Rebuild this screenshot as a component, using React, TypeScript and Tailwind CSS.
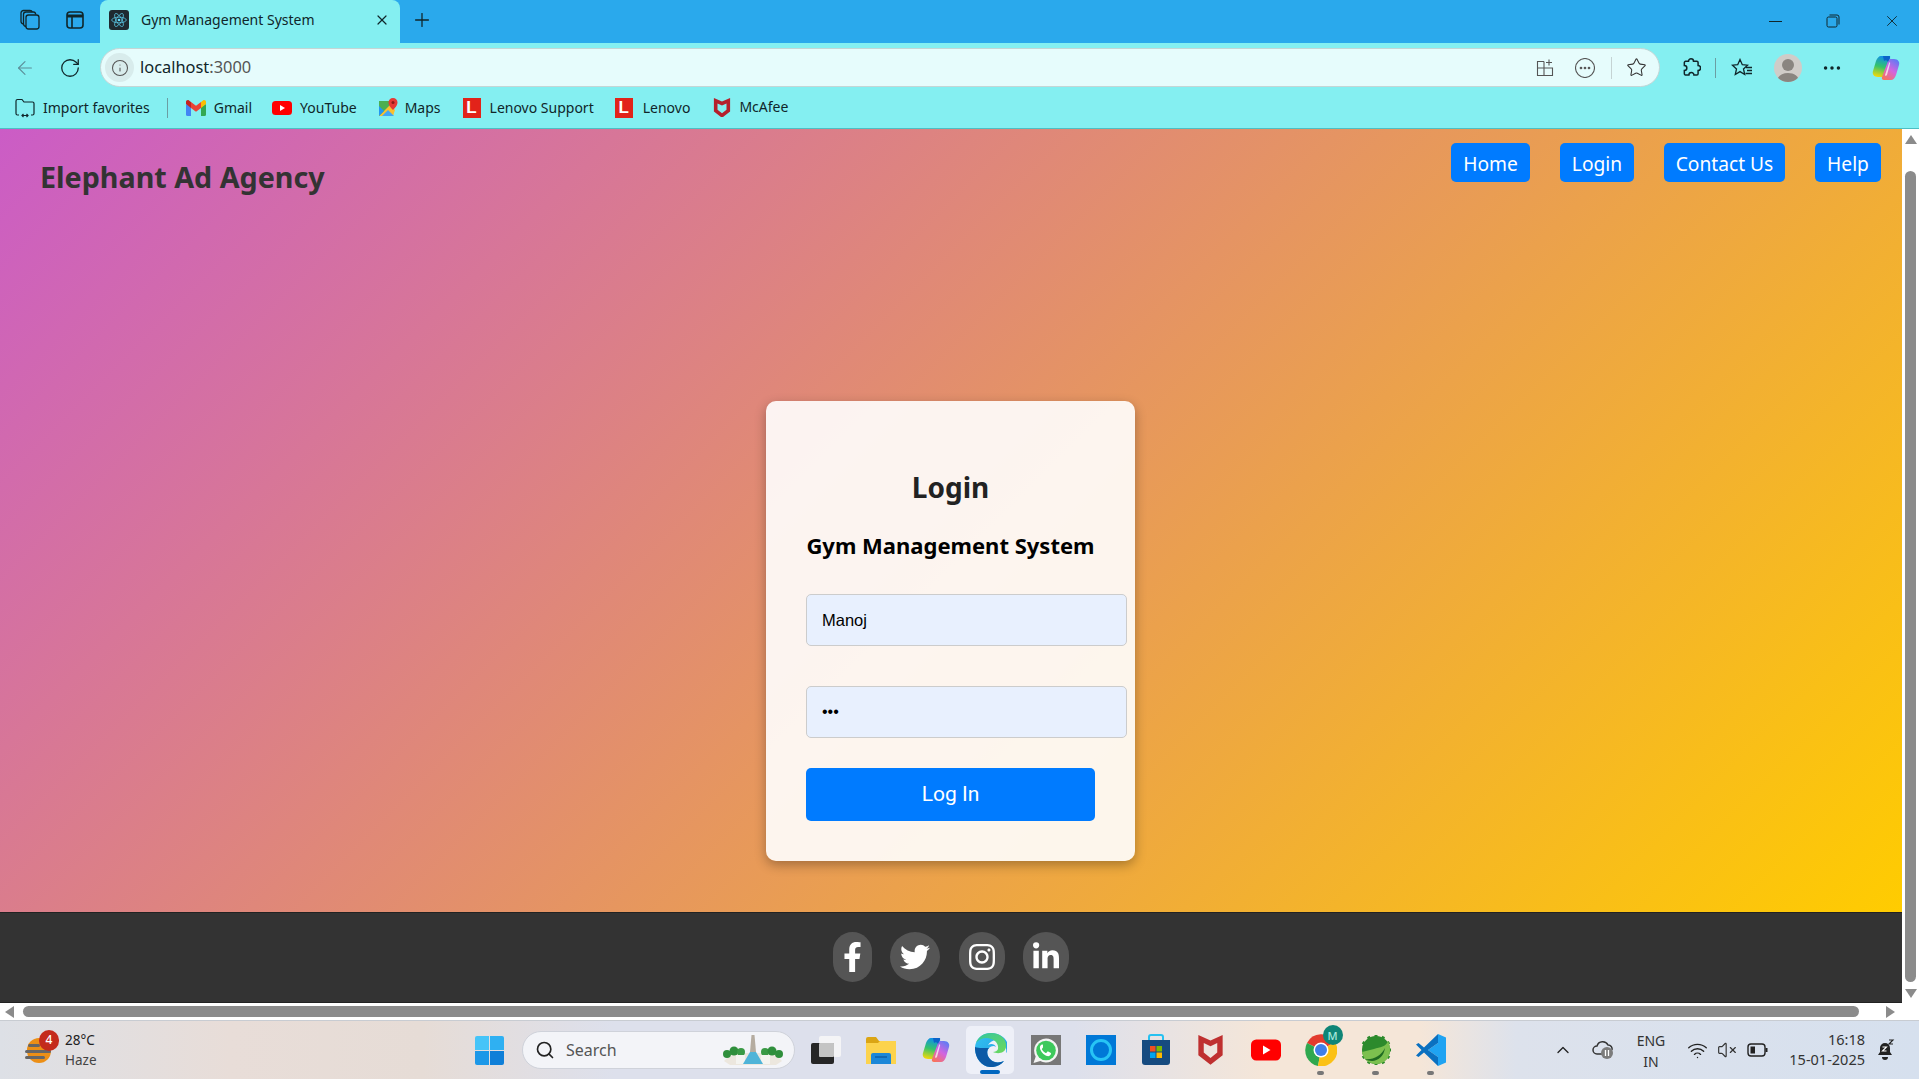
import React from "react";
import { FaFacebookF, FaTwitter, FaInstagram, FaLinkedinIn } from "react-icons/fa";
import { ArrowLeft, RotateCw, Info, X, Plus, Star, Search, ChevronUp, Wifi, VolumeX, MoreHorizontal } from "lucide-react";

const uiFont = "font-['Noto_Sans',sans-serif]";

function Gmail() {
  return (
    <svg width="20" height="16" viewBox="0 0 20 16">
      <path d="M0 4v10.500A1.500 1.500 0 0 0 1.500 16H5V7z" fill="#4285f4" />
      <path d="M20 4v10.500a1.500 1.500 0 0 1-1.500 1.500H15V7z" fill="#34a853" />
      <path d="M15 2v6l-5 3.700L5 8V2l5 3.700z" fill="#ea4335" />
      <path d="M15 2l2-1.500c1.200-.9 3-.1 3 1.500V4l-5 4z" fill="#fbbc04" />
      <path d="M5 2L3 .5C1.800-.4 0 .4 0 2v2l5 4z" fill="#c5221f" />
    </svg>
  );
}

function YouTubeLogo({ w = 20, h = 14 }: { w?: number; h?: number }) {
  return (
    <svg width={w} height={h} viewBox="0 0 20 14">
      <rect width="20" height="14" rx="3.500" fill="#f00" />
      <path d="M8 4l5 3-5 3z" fill="#fff" />
    </svg>
  );
}

function MapsLogo() {
  return (
    <svg width="20" height="20" viewBox="0 0 20 20">
      <path d="M1 3l11 0 0 15-11 0z" fill="#4caf50" />
      <path d="M1 18l11-11 5 5-2 6z" fill="#fbc02d" />
      <path d="M1 8l5 5-5 5z" fill="#2196f3" />
      <path d="M4 18l6-6 6 6z" fill="#42a5f5" />
      <path d="M15 0a4.500 4.500 0 0 0-4.500 4.500C10.500 8 15 12 15 12s4.500-4 4.500-7.500A4.500 4.500 0 0 0 15 0z" fill="#e53935" />
      <circle cx="15" cy="4.500" r="1.500" fill="#8e1a16" />
    </svg>
  );
}

function LenovoLogo() {
  return (
    <span className="flex h-[20px] w-[18px] items-center justify-center bg-[#e2231a] font-['Liberation_Sans',sans-serif] text-[17px] leading-none font-bold text-white">
      L
    </span>
  );
}

function McAfeeLogo({ size = 18, color = "#c8202f" }: { size?: number; color?: string }) {
  return (
    <svg width={size} height={size * 1.100} viewBox="0 0 20 22">
      <path d="M1 0l9 4 9-4v15l-9 7-9-7zM5 6v7l5 4 5-4V6l-5 2.300z" fill={color} fillRule="evenodd" />
    </svg>
  );
}

function CopilotLogo({ size = 28, id }: { size?: number; id: string }) {
  return (
    <svg width={size} height={size} viewBox="0 0 28 28">
      <defs>
        <linearGradient id={`${id}A`} x1="0.500" y1="0" x2="0.300" y2="1">
          <stop offset="0" stopColor="#0f8fe9" />
          <stop offset="0.500" stopColor="#35c46a" />
          <stop offset="1" stopColor="#f5d90a" />
        </linearGradient>
        <linearGradient id={`${id}B`} x1="0.800" y1="0" x2="0.200" y2="1">
          <stop offset="0" stopColor="#5a7cf5" />
          <stop offset="0.500" stopColor="#d264e0" />
          <stop offset="1" stopColor="#f8735a" />
        </linearGradient>
      </defs>
      <path d="M9 2h7c2 0 2.500 1.500 2 3l-6 16c-.5 1.500-1.500 2-3 2H6c-4 0-6-3-5-6l3-10C5 4 7 2 9 2z" fill={`url(#${id}A)`} />
      <path d="M19 26h-7c-2 0-2.500-1.500-2-3l6-16c.5-1.500 1.500-2 3-2h3c4 0 6 3 5 6l-3 10c-1 3-3 5-5 5z" fill={`url(#${id}B)`} />
      <path d="M11 2h6c1 0 1.500.5 1 1.500L16 8c-1-2-3-2-4-1z" fill="#0b63c9" />
      <path d="M13 21l4-12c.3-.9 1-1 1.200 0L15 21c-.3 1-2.300 1-2 0z" fill="#ffffff" opacity="0.700" />
    </svg>
  );
}

function EdgeLogo() {
  return (
    <svg width="32" height="34" viewBox="0 0 32 34">
      <defs>
        <linearGradient id="edA" x1="0" y1="0" x2="1" y2="1">
          <stop offset="0" stopColor="#35c1f1" />
          <stop offset="1" stopColor="#1b9de2" />
        </linearGradient>
        <linearGradient id="edB" x1="0" y1="0" x2="1" y2="1">
          <stop offset="0" stopColor="#33c6a0" />
          <stop offset="1" stopColor="#6ed95a" />
        </linearGradient>
      </defs>
      <path d="M16 0C7 0 1 6 0 14c-.5 10 6 19 15 20 6 .5 11-2 14-6-4 2-10 2-13-1-4-3-5-9-2-12 2-2 5-3 7-1-1-3-5-4-8-2 3-5 9-6 13-3 5 3 6 8 5 11 2-2 2-5 2-7C33 7 26 0 16 0z" fill="url(#edA)" />
      <path d="M16 0C9 0 3 4 1 10c4-5 11-6 15-4 4 1 8 5 7 10-.5 2-3 3-5 3 4 2 12 2 13-5C32 6 25 0 16 0z" fill="url(#edB)" />
      <path d="M0 14c-.5 10 6 19 15 20 6 .5 11-2 14-6-4 2-10 2-13-1-4-3-5-9-2-12-6 0-13 0-14-1z" fill="#0c5aa6" />
    </svg>
  );
}

function ChromeLogo() {
  return (
    <svg width="32" height="32" viewBox="0 0 32 32">
      <path d="M16 16L2 9A16 16 0 0 1 30 8z" fill="#e33b2e" />
      <path d="M16 16L2 9a16 16 0 0 0 11 23z" fill="#2fa84f" />
      <path d="M16 16l14-8a16 16 0 0 1-17 24z" fill="#fbc116" />
      <circle cx="16" cy="16" r="7.500" fill="#fff" />
      <circle cx="16" cy="16" r="6" fill="#3f7fe8" />
    </svg>
  );
}

function SpringLogo() {
  const teeth = [0, 30, 60, 90, 120, 150, 180, 210, 240, 270, 300];
  return (
    <svg width="30" height="30" viewBox="0 0 30 30">
      {teeth.map((deg) => (
        <rect key={deg} x="13.500" y="-0.500" width="3" height="4" fill="#2a8a2a" transform={`rotate(${deg - 60} 15 15)`} />
      ))}
      <circle cx="15" cy="15" r="14" fill="#2c8a2c" />
      <path d="M1 17c1 7 7 12 14 12 8 0 14-6 14-14 0-4-1-7-2-9-2 6-8 6-14 8-4 1-8 2-12 3z" fill="#7cc04f" />
      <path d="M4 24c8 1 16-3 20-11-1 8-7 13-13 13-3 0-5-1-7-2z" fill="#1f6b22" />
    </svg>
  );
}

function VsCodeLogo() {
  return (
    <svg width="30" height="32" viewBox="0 0 30 32">
      <path d="M22 0l8 3.500v25L22 32V23L12 16l10-7z" fill="#1fa3f2" />
      <path d="M22 0L8 13.500 2.500 9 0 10.500 5.500 16 0 21.500 2.500 23 8 18.500 22 32v-9L12 16l10-7z" fill="#0a70c0" />
    </svg>
  );
}

function WhatsAppLogo() {
  return (
    <span className="flex h-[30px] w-[30px] items-center justify-center bg-[#777]">
      <svg width="27" height="27" viewBox="0 0 27 27">
        <path d="M14 1.500a12 12 0 0 0-10.300 18L1.500 26l6.800-2A12 12 0 1 0 14 1.500z" fill="#f4f4f4" />
        <circle cx="14" cy="13.500" r="9.800" fill="#3ec95c" />
        <path d="M10 7.500c-1.500.5-2.500 2-2 4 .8 3 3.500 6.500 7 7.500 2 .5 3.500-.5 4-2 .2-.7 0-1-.5-1.300l-2.300-1.200c-.5-.2-.8 0-1 .3l-.7 1c-.3.3-.5.3-.9.100-1.500-.8-2.800-2-3.600-3.500-.2-.4-.1-.6.200-.9l.6-.7c.3-.3.300-.6.200-1L11 8c-.2-.5-.6-.6-1-.5z" fill="#fff" />
      </svg>
    </span>
  );
}

function WindowsLogo() {
  return (
    <div className="grid h-[29px] w-[29px] grid-cols-2 grid-rows-2 gap-[1px]">
      <span className="rounded-tl-[2px] bg-[#45c4f8]" />
      <span className="rounded-tr-[2px] bg-[#2fb0f2]" />
      <span className="rounded-bl-[2px] bg-[#1c98e8]" />
      <span className="rounded-br-[2px] bg-[#0f7fd8]" />
    </div>
  );
}

function Separator({ className }: { className: string }) {
  return <span className={`h-[20px] w-px bg-[#6b9ea3] ${className}`} />;
}

function Bookmark({ icon, label, className }: { icon: React.ReactNode; label: string; className: string }) {
  return (
    <div className={`flex items-center ${className}`}>
      {icon}
      <span className="text-[14px] leading-none text-[#10262a]">{label}</span>
    </div>
  );
}

function BrowserChrome() {
  return (
    <div className={`shrink-0 ${uiFont}`}>
      {/* tab strip */}
      <div className="flex h-[43px] bg-[#2aa9ec] text-[#10262a]">
        <div className="flex w-[100px] items-center pb-[4px] pl-[19px]">
          <svg width="22" height="22" viewBox="0 0 22 22" fill="none" stroke="#10262a" strokeWidth="1.300">
            <rect x="7" y="6" width="13" height="14" rx="2.500" />
            <path d="M7 17.500C5 17 4.500 16 4.500 15V5.500C4.500 4 5.500 3 7 3h7.500c1 0 2 .7 2.300 2.500" />
            <path d="M4.500 15C2.500 14.500 2 13.500 2 12.500V4c0-1.500 1-2.500 2.500-2.500H11c1 0 2 .6 2.300 1.500" />
          </svg>
          <svg className="ml-[25px]" width="18" height="18" viewBox="0 0 18 18" fill="none" stroke="#10262a" strokeWidth="1.600">
            <rect x="1" y="1" width="16" height="16" rx="3" />
            <path d="M1 5h16" strokeWidth="3" />
            <path d="M6 5v12" />
          </svg>
        </div>
        <div className="flex h-[43px] w-[300px] items-center rounded-t-[8px] bg-[#84eff1] pb-[4px] pl-[9px]">
          <span className="flex h-[20px] w-[20px] items-center justify-center rounded-[3px] bg-[#1f2a30]">
            <svg width="16" height="16" viewBox="-12 -12 24 24" fill="none" stroke="#61dafb" strokeWidth="1">
              <circle r="2" fill="#61dafb" stroke="none" />
              <ellipse rx="11" ry="4.200" />
              <ellipse rx="11" ry="4.200" transform="rotate(60)" />
              <ellipse rx="11" ry="4.200" transform="rotate(120)" />
            </svg>
          </span>
          <span className="ml-[12px] text-[14px] leading-none">Gym Management System</span>
          <X className="ml-[59px]" size={16} strokeWidth={1.800} />
        </div>
        <div className="ml-[11px] flex items-center pb-[4px]">
          <Plus size={22} strokeWidth={1.400} />
        </div>
        <div className="ml-auto flex items-center pr-[18px] pb-[1px]">
          <span className="h-px w-[13px] bg-[#10262a]" />
          <svg className="ml-[44px]" width="14" height="14" viewBox="0 0 14 14" fill="none" stroke="#10262a" strokeWidth="1">
            <rect x="1" y="3" width="10" height="10" rx="1.500" />
            <path d="M3.500 1h7.500a2 2 0 0 1 2 2v7.500" />
          </svg>
          <X className="ml-[43px]" size={18} strokeWidth={1.200} />
        </div>
      </div>

      {/* address bar */}
      <div className="flex h-[44px] items-center bg-[#84eff1] pt-[5px]">
        <ArrowLeft className="ml-[14px] text-[#5b8e98]" size={22} strokeWidth={1.200} />
        <RotateCw className="ml-[23px] text-[#10262a]" size={22} strokeWidth={1.400} />
        <div className="ml-[19px] flex h-[39px] w-[1560px] items-center rounded-full border border-[#c4d6d6] bg-[#e6fcfc]">
          <span className="ml-[4px] flex h-[29px] w-[29px] items-center justify-center rounded-full bg-[#d8ecec]">
            <Info className="text-[#555]" size={18} strokeWidth={1.400} />
          </span>
          <span className="ml-[6px] text-[16.400px] leading-none text-[#10262a]">
            localhost<span className="text-[#555]">:3000</span>
          </span>
          <div className="ml-auto flex items-center pr-[12px] text-[#555]">
            <svg width="18" height="18" viewBox="0 0 18 18" fill="none" stroke="#555" strokeWidth="1.100">
              <path d="M8 2.500H1.500v14h15V9H1.500M8 2.500v14" />
              <path d="M13 0.500v6M10 3.500h6" />
            </svg>
            <svg className="ml-[21px]" width="20" height="20" viewBox="0 0 20 20" fill="none" stroke="#555" strokeWidth="1.100">
              <circle cx="10" cy="10" r="9.500" />
              <circle cx="6" cy="10" r=".8" fill="#555" />
              <circle cx="10" cy="10" r=".8" fill="#555" />
              <circle cx="14" cy="10" r=".8" fill="#555" />
            </svg>
            <span className="ml-[16px] h-[22px] w-px bg-[#c5d3d3]" />
            <Star className="ml-[14px] text-[#333]" size={21} strokeWidth={1.200} />
          </div>
        </div>
        <svg className="ml-[21px]" width="20" height="20" viewBox="0 0 24 24" fill="none" stroke="#10262a" strokeWidth="1.800">
          <path d="M9 4a3 3 0 0 1 6 0h4a1.500 1.500 0 0 1 1.500 1.500V9a3 3 0 0 1 0 6v4a1.500 1.500 0 0 1-1.500 1.500h-3.500a3 3 0 0 0-6 0H6A2 2 0 0 1 4 18.500V15a3 3 0 0 0 0-6V5.500A1.500 1.500 0 0 1 5.500 4z" />
        </svg>
        <Separator className="ml-[14px]" />
        <svg className="ml-[15px]" width="22" height="20" viewBox="0 0 22 20" fill="none" stroke="#10262a" strokeWidth="1.300">
          <path d="M9 1.500l2.300 5.200 5.200.5-4 3.700 1.200 5.600L9 13.600l-4.700 2.900 1.200-5.600-4-3.700 5.200-.5z" />
          <path d="M15 9.500h6M16 12.500h5M14.500 15.500h6.500" />
        </svg>
        <span className="ml-[21px] flex h-[28px] w-[28px] items-end justify-center overflow-hidden rounded-full bg-[#d0ccc8]">
          <svg width="24" height="25" viewBox="0 0 24 25" fill="#8a8580">
            <circle cx="12" cy="8" r="6" />
            <path d="M1 25c0-6 5-9 11-9s11 3 11 9z" />
          </svg>
        </span>
        <MoreHorizontal className="ml-[19px] text-[#10262a]" size={22} strokeWidth={1.800} />
        <span className="ml-[29px] flex"><CopilotLogo id="cpTop" /></span>
      </div>

      {/* favourites */}
      <div className="flex h-[42px] items-center border-b border-[#4cbfc4] bg-[#84eff1]">
        <Bookmark
          className="ml-[15px] gap-[8px]"
          label="Import favorites"
          icon={
            <svg width="20" height="20" viewBox="0 0 20 20" fill="none" stroke="#10262a" strokeWidth="1.200">
              <path d="M4 17H2.500A1.500 1.500 0 0 1 1 15.500V3a1.500 1.500 0 0 1 1.500-1.500H7L9 4h8.500A1.500 1.500 0 0 1 19 5.500v10a1.500 1.500 0 0 1-1.500 1.500H16" />
              <path d="M7 17.500h6M8.500 16l-1.500 1.500L8.500 19M11.500 16l1.500 1.500-1.500 1.500" />
            </svg>
          }
        />
        <Separator className="ml-[17px]" />
        <Bookmark className="ml-[18px] gap-[8px]" label="Gmail" icon={<Gmail />} />
        <Bookmark className="ml-[20px] gap-[8px]" label="YouTube" icon={<YouTubeLogo />} />
        <Bookmark className="ml-[21px] gap-[7px]" label="Maps" icon={<MapsLogo />} />
        <Bookmark className="ml-[22px] gap-[9px]" label="Lenovo Support" icon={<LenovoLogo />} />
        <Bookmark className="ml-[21px] gap-[10px]" label="Lenovo" icon={<LenovoLogo />} />
        <Bookmark className="ml-[23px] gap-[8px]" label="McAfee" icon={<McAfeeLogo color="#b5202c" />} />
      </div>
    </div>
  );
}

function NavButton({ label, width }: { label: string; width: string }) {
  return (
    <a className={`flex h-[39px] items-center justify-center rounded-[5px] bg-[#007bff] pt-[2px] text-[19.200px] leading-none text-white ${width}`}>
      {label}
    </a>
  );
}

function SocialLink({ children }: { children: React.ReactNode }) {
  return <a className="flex rounded-full bg-[#555] p-[10px] text-white">{children}</a>;
}

function LoginPage() {
  return (
    <div className="flex min-w-0 flex-1 flex-col">
      <div className="flex h-[783px] flex-col bg-[linear-gradient(135deg,#cb5cc6,#ffcc00)]">
        <nav className={`flex h-[272px] shrink-0 items-start justify-between pr-[21px] ${uiFont}`}>
          <h1 className="mt-[28px] ml-[40px] text-[28.700px] leading-[40px] font-bold text-[#333]">Elephant Ad Agency</h1>
          <div className="mt-[14px] flex gap-[30px]">
            <NavButton label="Home" width="w-[79px]" />
            <NavButton label="Login" width="w-[74px]" />
            <NavButton label="Contact Us" width="w-[121px]" />
            <NavButton label="Help" width="w-[66px]" />
          </div>
        </nav>
        <div className="flex justify-center pr-[1px]">
          <div className="h-[460px] w-[369px] rounded-[10px] bg-white/90 px-[40px] pt-[66px] shadow-[0_4px_12px_rgba(0,0,0,0.3)]">
            <h2 className={`text-center text-[28px] leading-[40px] font-bold text-[#222] ${uiFont}`}>Login</h2>
            <h3 className={`mt-[23px] text-center text-[22px] leading-[30px] font-bold text-black ${uiFont}`}>Gym Management System</h3>
            <input
              readOnly
              value="Manoj"
              className="mt-[34px] block h-[52px] w-[321px] rounded-[5px] border border-[#ccc] bg-[#e8f0fe] px-[15px] font-['Liberation_Sans',sans-serif] text-[16.500px] text-black"
            />
            <input
              readOnly
              type="password"
              value="abc"
              className="mt-[40px] block h-[52px] w-[321px] rounded-[5px] border border-[#ccc] bg-[#e8f0fe] px-[15px] font-['Liberation_Sans',sans-serif] text-[16px] text-black"
            />
            <button className="mt-[30px] h-[53px] w-[289px] rounded-[5px] bg-[#007bff] font-['Roboto',sans-serif] text-[21px] text-white">
              Log In
            </button>
          </div>
        </div>
      </div>
      <footer className="flex h-[91px] shrink-0 items-center justify-center gap-[18.500px] border-y border-[#222] bg-[#333] pb-[2px]">
        <SocialLink><FaFacebookF className="h-[30px] w-[19px]" /></SocialLink>
        <SocialLink><FaTwitter className="h-[30px] w-[30px]" /></SocialLink>
        <SocialLink><FaInstagram className="h-[30px] w-[26px]" /></SocialLink>
        <SocialLink><FaLinkedinIn className="h-[30px] w-[26px]" /></SocialLink>
      </footer>
      {/* horizontal scrollbar */}
      <div className="flex h-[17px] shrink-0 items-center bg-white">
        <span className="ml-[5px] h-0 w-0 border-y-[6px] border-r-[9px] border-y-transparent border-r-[#8b8b8b]" />
        <span className="ml-[9px] h-[11px] w-[1836px] rounded-full bg-[#8b8b8b]" />
        <span className="ml-[27px] h-0 w-0 border-y-[6px] border-l-[9px] border-y-transparent border-l-[#8b8b8b]" />
      </div>
    </div>
  );
}

function VerticalScrollbar() {
  return (
    <div className="flex w-[17px] shrink-0 flex-col items-center bg-white pt-[6px] pb-[3px]">
      <span className="h-0 w-0 border-x-[6px] border-b-[9px] border-x-transparent border-b-[#8b8b8b]" />
      <span className="mt-[27px] w-[11px] flex-1 rounded-full bg-[#8b8b8b]" />
      <span className="mt-[7px] mb-[19px] h-0 w-0 border-x-[6px] border-t-[9px] border-x-transparent border-t-[#8b8b8b]" />
    </div>
  );
}

const taskbarApps: { key: string; icon: React.ReactNode; dot?: boolean; active?: boolean }[] = [
  {
    key: "taskview",
    icon: (
      <div className="relative h-[28px] w-[30px]">
        <span className="absolute top-0 right-0 h-[21px] w-[22px] rounded-[2px] bg-[#f4f4f6]" />
        <span className="absolute bottom-0 left-0 h-[21px] w-[23px] rounded-[2px] bg-[#262626]" />
        <span className="absolute top-[7px] right-[7px] h-[14px] w-[15px] rounded-[1px] bg-[#c4c4c4]" />
      </div>
    ),
  },
  {
    key: "files",
    icon: (
      <svg width="30" height="27" viewBox="0 0 30 27">
        <path d="M0 2a2 2 0 0 1 2-2h8l3 4h15a2 2 0 0 1 2 2v5H0z" fill="#dba514" />
        <path d="M0 6h12l2-2h16v23H0z" fill="#fcd34d" />
        <path d="M5 18a2 2 0 0 1 2-2h16a2 2 0 0 1 2 2v9H5z" fill="#1c87d8" />
        <path d="M9 20h12" stroke="#0e5fa8" strokeWidth="1.500" />
      </svg>
    ),
  },
  { key: "copilot", icon: <CopilotLogo size={28} id="cpBar" /> },
  { key: "edge", icon: <EdgeLogo />, active: true },
  { key: "whatsapp", icon: <WhatsAppLogo /> },
  {
    key: "alexa",
    icon: (
      <span className="flex h-[30px] w-[30px] items-center justify-center bg-[#0078d7]">
        <span className="h-[22px] w-[22px] rounded-full border-[3px] border-[#27c4f5]" />
      </span>
    ),
  },
  {
    key: "store",
    icon: (
      <svg width="30" height="32" viewBox="0 0 30 32">
        <path d="M8 6V3a2 2 0 0 1 2-2h10a2 2 0 0 1 2 2v3" fill="none" stroke="#26c1f1" strokeWidth="2" />
        <path d="M1 6h28v22a3 3 0 0 1-3 3H4a3 3 0 0 1-3-3z" fill="#164b80" />
        <rect x="9" y="12" width="5.500" height="5.500" fill="#f25022" />
        <rect x="15.500" y="12" width="5.500" height="5.500" fill="#7fba00" />
        <rect x="9" y="18.500" width="5.500" height="5.500" fill="#00a4ef" />
        <rect x="15.500" y="18.500" width="5.500" height="5.500" fill="#ffb900" />
      </svg>
    ),
  },
  { key: "mcafee", icon: <McAfeeLogo size={27} color="#bf3030" /> },
  { key: "youtube", icon: <YouTubeLogo w={30} h={22} /> },
  {
    key: "chrome",
    dot: true,
    icon: (
      <div className="relative">
        <ChromeLogo />
        <span className="absolute -top-[9px] -right-[6px] flex h-[20px] w-[20px] items-center justify-center rounded-full bg-[#0f8577] text-[11px] leading-none font-medium text-[#a8e8dc]">
          M
        </span>
      </div>
    ),
  },
  { key: "spring", dot: true, icon: <SpringLogo /> },
  { key: "vscode", dot: true, icon: <VsCodeLogo /> },
];

function Taskbar() {
  return (
    <div className={`flex h-[59px] shrink-0 items-center border-t border-[#c8ccd2] bg-[linear-gradient(90deg,#dde0e6_0%,#e8ddd8_12%,#e6dcd6_22%,#dde0ec_32%,#dde0ec_56%,#f5e6d8_66%,#f5e6d8_74%,#dde2ec_79%,#d6e0ee_100%)] text-[#222] ${uiFont}`}>
      <div className="relative ml-[25px] h-[33px] w-[27px]">
        <span className="absolute inset-y-[4px] left-[2px] w-[24px] rounded-full bg-[#ec8f16]" />
        <span className="absolute top-[10px] left-[3px] h-[3px] w-[12px] rounded-full bg-[#666]" />
        <span className="absolute top-[16px] left-0 h-[3px] w-[26px] rounded-full bg-[#666]" />
        <span className="absolute top-[22px] left-0 h-[3px] w-[20px] rounded-full bg-[#666]" />
        <span className="absolute -top-[4px] right-[-7px] flex h-[21px] w-[20px] items-center justify-center rounded-full bg-[#c42b1c] text-[12px] leading-none font-medium text-white">
          4
        </span>
      </div>
      <div className="ml-[13px] flex w-[59px] flex-col text-[13.500px] leading-[20px]">
        <span>28°C</span>
        <span className="text-[#444]">Haze</span>
      </div>
      <div className="ml-[351px]"><WindowsLogo /></div>
      <div className="ml-[18px] flex h-[38px] w-[273px] items-center rounded-full border border-[#cfd2da] bg-[#f3f4f8]">
        <Search className="ml-[12px] text-[#222]" size={20} strokeWidth={2} />
        <span className="ml-[11px] text-[16px] text-[#555]">Search</span>
        <svg className="mr-[9px] ml-auto" width="64" height="32" viewBox="0 0 64 32">
          <path d="M3 27l8-8h42l8 8-6 4H9z" fill="#ece7de" />
          <circle cx="6" cy="20" r="4" fill="#2f8f3c" />
          <circle cx="13" cy="17" r="4.500" fill="#2f8f3c" />
          <circle cx="20" cy="18" r="4" fill="#3a9a45" />
          <circle cx="44" cy="18" r="4" fill="#3a9a45" />
          <circle cx="51" cy="17" r="4.500" fill="#2f8f3c" />
          <circle cx="58" cy="20" r="4" fill="#2f8f3c" />
          <rect x="15" y="21" width="9" height="9" fill="#f4f4f0" />
          <rect x="40" y="21" width="9" height="9" fill="#f4f4f0" />
          <path d="M22 30l7-12h6l7 12z" fill="#4fb4d8" />
          <path d="M30.500 1h3l1.500 17h-6z" fill="#b5aca0" />
        </svg>
      </div>
      <div className="ml-[3px] flex">
        {taskbarApps.map((app) => (
          <div key={app.key} className="relative flex h-[48px] w-[55px] items-center justify-center">
            {app.active && <span className="absolute inset-y-0 left-[3px] w-[48px] rounded-[5px] bg-[#eef0f8]" />}
            <span className="relative flex">{app.icon}</span>
            {app.active && <span className="absolute bottom-0 left-[17px] h-[4px] w-[20px] rounded-full bg-[#0067c0]" />}
            {app.dot && <span className="absolute -bottom-[1px] left-[24px] h-[4px] w-[7px] rounded-full bg-[#777]" />}
          </div>
        ))}
      </div>
      <ChevronUp className="ml-[95px] text-[#222]" size={20} strokeWidth={1.600} />
      <svg className="ml-[19px]" width="22" height="20" viewBox="0 0 22 20">
        <path d="M5 14a4 4 0 0 1 0-8 6 6 0 0 1 11-1 4 4 0 0 1 4 5" fill="none" stroke="#333" strokeWidth="1.500" />
        <path d="M5 14h8" stroke="#333" strokeWidth="1.500" />
        <circle cx="15" cy="13" r="6" fill="#7c7c7c" />
        <path d="M13.500 10v6M16.500 10v6" stroke="#fff" strokeWidth="1.300" />
      </svg>
      <div className="ml-[19px] flex w-[36px] flex-col items-center pt-[1px] text-[14px] leading-[21px] text-[#333]">
        <span>ENG</span>
        <span>IN</span>
      </div>
      <Wifi className="ml-[18px] text-[#222]" size={21} strokeWidth={1.600} />
      <VolumeX className="ml-[9px] text-[#333]" size={20} strokeWidth={1.400} />
      <svg className="ml-[10px]" width="21" height="14" viewBox="0 0 21 14">
        <rect x="1" y="1" width="17" height="12" rx="3" fill="none" stroke="#222" strokeWidth="1.400" />
        <rect x="3.500" y="3.500" width="4.500" height="7" fill="#222" />
        <rect x="18.500" y="5" width="2" height="4" fill="#222" />
      </svg>
      <div className="ml-[19px] mb-[2px] flex w-[78px] flex-col items-end text-[14.500px] leading-[20px] text-[#333]">
        <span>16:18</span>
        <span>15-01-2025</span>
      </div>
      <svg className="ml-[12px]" width="18" height="22" viewBox="0 0 18 22" fill="#222">
        <path d="M8 4a5 5 0 0 0-5 5v4l-2 3h14l-2-3V9a5 5 0 0 0-5-5z" />
        <path d="M5 18a3 3 0 0 0 6 0z" />
        <path d="M5.500 8h4L5.500 12h4" stroke="#fff" strokeWidth="1.100" fill="none" />
        <path d="M12 1h4l-4 4h4" stroke="#222" strokeWidth="1.100" fill="none" />
      </svg>
    </div>
  );
}

export default function App() {
  return (
    <div className="flex h-[1079px] w-[1919px] flex-col overflow-hidden">
      <BrowserChrome />
      <div className="flex h-[891px] shrink-0">
        <LoginPage />
        <VerticalScrollbar />
      </div>
      <Taskbar />
    </div>
  );
}
